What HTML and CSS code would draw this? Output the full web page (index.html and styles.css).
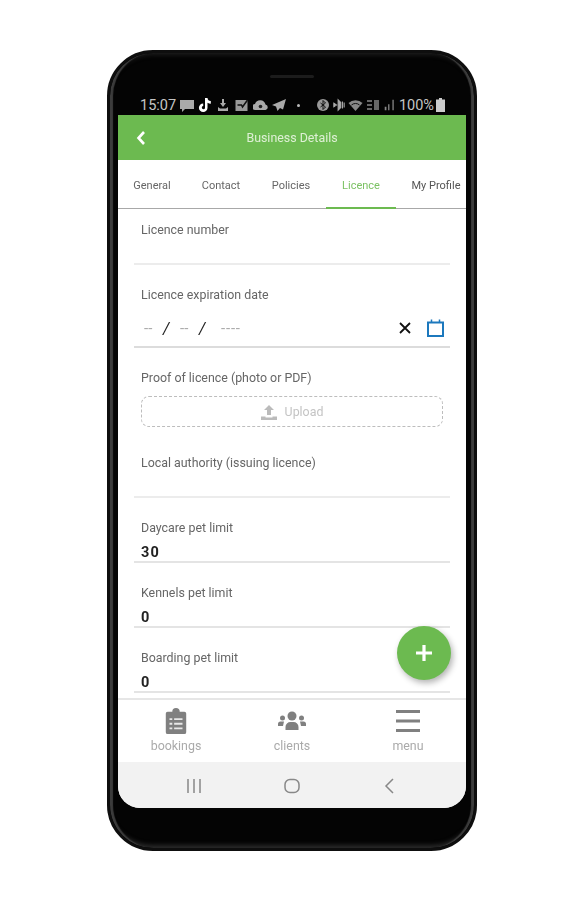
FILE: index.html
```html
<!DOCTYPE html>
<html lang="en">
<head>
    <meta charset="UTF-8">
    <meta name="viewport" content="width=device-width, initial-scale=1.0">
    <title>Business Details</title>
    <link rel="stylesheet" href="styles.css">
</head>
<body>
    <div class="phone">
        <div class="speaker"></div>

        <!-- Status bar -->
        <div class="status-bar">
            <span class="clock">15:07</span>
            <svg class="status-icon" viewBox="0 0 14 14"><path d="M0 2h14v9H5l-3 3v-3H0z" fill="#aaa"/></svg>
            <svg class="status-icon" viewBox="0 0 14 14"><path d="M7 0h2.500c.2 1.800 1.300 2.900 3.300 3.100v2.600c-1.200 0-2.300-.3-3.300-1v5a4.300 4.300 0 1 1-4.300-4.300v2.700a1.600 1.600 0 1 0 1.800 1.600z" fill="#fff"/></svg>
            <svg class="status-icon" viewBox="0 0 14 14"><path d="M6 1h2v4h2L7 9 4 5h2zM2 9l2 1.500h6L12 9v4H2z" fill="#aaa"/></svg>
            <svg class="status-icon status-icon-wide" viewBox="0 0 14 14"><path d="M2 3h10v9H2z" fill="#999" stroke="#999" stroke-width="2"/><path d="M3 7h4l1 2 5-7" fill="none" stroke="#111" stroke-width="1.500"/></svg>
            <svg class="status-icon status-icon-wide" viewBox="0 0 14 14"><path d="M2 12a3 3 0 0 1-.5-6 5.500 5.500 0 0 1 10.500.5A2.800 2.800 0 0 1 12 12z" fill="#aaa"/><circle cx="7" cy="8.500" r="1.800" fill="#222"/></svg>
            <svg class="status-icon" viewBox="0 0 14 14"><path d="M14 1L0 7l4 1.500L5.500 13l2.500-3 3 1.500z" fill="#aaa"/></svg>
            <span class="status-dot"></span>
            <span class="status-spacer"></span>
            <div class="status-group">
                <svg class="status-icon" viewBox="0 0 14 14"><circle cx="7" cy="7" r="6" fill="#999"/><path d="M7 2.500v9M4.500 5l5 4L7 11.500M4.500 9l5-4L7 2.500" fill="none" stroke="#111" stroke-width="1"/></svg>
                <svg class="status-icon status-icon-small" viewBox="0 0 14 14"><path d="M1 5l3 2-3 2zM6 1v12l3-3V4zM11 3v8M13 4v6" fill="#aaa" stroke="#aaa" stroke-width="1.300"/></svg>
                <svg class="status-icon status-icon-wide" viewBox="0 0 14 14"><path d="M0 5a10 10 0 0 1 14 0l-7 8z" fill="#888"/><path d="M3 7a6 6 0 0 1 8 0" fill="none" stroke="#111"/></svg>
                <svg class="status-icon" viewBox="0 0 14 14"><path d="M1 2h5v2H1zM1 6h5v2H1zM1 10h5v2H1zM8 2h5v10H8z" fill="#666"/></svg>
                <svg class="status-icon status-icon-small" viewBox="0 0 14 14"><path d="M2 9h2v4H2zM6 6h1.500v7H6zM11 1h1.500v12H11z" fill="#888"/></svg>
            </div>
            <span class="battery-text">100%</span>
            <svg class="battery" viewBox="0 0 9 14"><path d="M3 0h3v1.500h3V14H0V1.500h3z" fill="#ccc"/></svg>
        </div>

        <div class="screen">
            <!-- Header -->
            <div class="app-header">
                <svg class="back-icon" viewBox="0 0 10 16"><path d="M8 2L2.500 8 8 14" fill="none" stroke="#fff" stroke-width="2.600"/></svg>
                <span class="app-title">Business Details</span>
            </div>

            <!-- Tabs -->
            <div class="tabs">
                <div class="tab">General</div>
                <div class="tab">Contact</div>
                <div class="tab">Policies</div>
                <div class="tab tab-active">Licence</div>
                <div class="tab tab-last">My Profile</div>
            </div>

            <!-- Form -->
            <div class="form">
                <div class="field">
                    <div class="field-label">Licence number</div>
                    <div class="field-input"></div>
                </div>
                <div class="field">
                    <div class="field-label">Licence expiration date</div>
                    <div class="field-input date-input">
                        <span class="date-part">--</span>
                        <span class="date-slash">/</span>
                        <span class="date-part">--</span>
                        <span class="date-slash">/</span>
                        <span class="date-part date-year">----</span>
                        <svg class="clear-icon" viewBox="0 0 12 12"><path d="M1 1l10 10M11 1L1 11" stroke="#111" stroke-width="1.800"/></svg>
                        <svg class="calendar-icon" viewBox="0 0 17 18"><path d="M1 3.500h15v13.500H1z" fill="none" stroke="#1c78bd" stroke-width="2"/><path d="M4.500 .5v3M12.500 .5v3" stroke="#1c78bd" stroke-width="1.500"/></svg>
                    </div>
                </div>
                <div class="field field-upload">
                    <div class="field-label">Proof of licence (photo or PDF)</div>
                    <div class="upload">
                        <svg class="upload-icon" viewBox="0 0 16 16"><path d="M8 1l5 5h-3v5H6V6H3zM0 12.500h4.500v1h7v-1H16V16H0z" fill="#bbb"/></svg>
                        <span>Upload</span>
                    </div>
                </div>
                <div class="field">
                    <div class="field-label">Local authority (issuing licence)</div>
                    <div class="field-input"></div>
                </div>
                <div class="field">
                    <div class="field-label">Daycare pet limit</div>
                    <div class="field-input field-value">30</div>
                </div>
                <div class="field">
                    <div class="field-label">Kennels pet limit</div>
                    <div class="field-input field-value">0</div>
                </div>
                <div class="field">
                    <div class="field-label">Boarding pet limit</div>
                    <div class="field-input field-value">0</div>
                </div>
            </div>

            <!-- Bottom navigation -->
            <div class="bottom-nav">
                <div class="nav-item">
                    <svg class="nav-icon" viewBox="0 0 24 28"><path d="M3 4h5a4 4 0 0 1 8 0h5a2 2 0 0 1 2 2v20a2 2 0 0 1-2 2H3a2 2 0 0 1-2-2V6a2 2 0 0 1 2-2z" fill="#808080"/><path d="M5 11h3v2H5zM10 11h9v2h-9zM5 16h3v2H5zM10 16h9v2h-9zM5 21h3v2H5zM10 21h9v2h-9z" fill="#e8e8e8"/></svg>
                    <span>bookings</span>
                </div>
                <div class="nav-item">
                    <svg class="nav-icon nav-icon-wide" viewBox="0 0 28 20"><circle cx="14" cy="5" r="4.500" fill="#808080"/><circle cx="4.500" cy="7" r="2.500" fill="#808080"/><circle cx="23.500" cy="7" r="2.500" fill="#808080"/><path d="M7.500 19v-3a5 5 0 0 1 5-5h3a5 5 0 0 1 5 5v3zM0 15v-2a2.500 2.500 0 0 1 2.500-2.500H6L5 15zM28 15v-2a2.500 2.500 0 0 0-2.500-2.500H22l1 4.500z" fill="#808080"/></svg>
                    <span>clients</span>
                </div>
                <div class="nav-item">
                    <svg class="nav-icon" viewBox="0 0 24 24"><path d="M0 1h24v3H0zM0 10.500h24v3H0zM0 20h24v3H0z" fill="#808080"/></svg>
                    <span>menu</span>
                </div>
            </div>

            <!-- Android buttons -->
            <div class="android-nav">
                <svg class="android-icon" viewBox="0 0 16 16"><path d="M2 1v14M8 1v14M14 1v14" stroke="#888" stroke-width="1.500"/></svg>
                <svg class="android-icon" viewBox="0 0 16 16"><rect x="1" y="1.500" width="14" height="13" rx="5" fill="none" stroke="#888" stroke-width="1.500"/></svg>
                <svg class="android-icon" viewBox="0 0 16 16"><path d="M11 1L4 8l7 7" fill="none" stroke="#888" stroke-width="1.500"/></svg>
            </div>

            <button class="fab">
                <svg viewBox="0 0 18 18"><path d="M9 1v16M1 9h16" stroke="#fff" stroke-width="3.200"/></svg>
            </button>
        </div>
    </div>
</body>
</html>
```

FILE: styles.css
```css
body {
    margin: 0;
    background-color: #ffffff;
    font-family: Roboto, "Liberation Sans", sans-serif;
    color: #666;
}

/* Phone frame, the source picture is a soft video still */
.phone {
    box-sizing: border-box;
    width: 370px;
    height: 801px;
    margin: 50px 0 0 107px;
    padding: 0 8px;
    display: flex;
    flex-direction: column;
    align-items: center;
    background-color: #040404;
    border: 3px solid #0e0e0e;
    border-radius: 46px;
    box-shadow: inset 4px 0 1px -1px #3c3c3c, inset -4px 0 1px -1px #3c3c3c, inset 0 -7px 4px -4px #2a2a2a, inset 0 5px 4px -3px #1c1c1c;
    filter: blur(0.5px);
}
.speaker {
    width: 44px;
    height: 3px;
    margin-top: 22px;
    background-color: #1c1c1c;
    border-radius: 2px;
}

/* Status bar */
.status-bar {
    box-sizing: border-box;
    width: 348px;
    height: 20px;
    margin-top: 17px;
    padding: 0 21px 0 22px;
    display: flex;
    align-items: center;
    gap: 4px;
    color: #c4c4c4;
    font-size: 14.5px;
}
.status-group {
    display: flex;
    align-items: center;
    gap: 3px;
}
.status-icon {
    width: 14px;
    height: 14px;
    flex-shrink: 0;
}
.status-icon-wide {
    width: 15px;
}
.status-icon-small {
    width: 12px;
}
.status-dot {
    width: 3px;
    height: 3px;
    margin-left: 7px;
    background-color: #bbb;
    border-radius: 50%;
}
.status-spacer {
    flex: 1;
}
.battery {
    width: 9px;
    height: 14px;
    margin-left: -2px;
    flex-shrink: 0;
}

/* Screen */
.screen {
    position: relative;
    width: 348px;
    height: 693px;
    display: flex;
    flex-direction: column;
    background-color: #ffffff;
    border-radius: 0 0 22px 22px;
    overflow: hidden;
}
.app-header {
    height: 45px;
    flex-shrink: 0;
    display: flex;
    align-items: center;
    background-color: #6cba50;
}
.back-icon {
    width: 10px;
    height: 16px;
    margin-left: 18px;
}
.app-title {
    flex: 1;
    margin-right: 28px;
    text-align: center;
    font-size: 12.4px;
    color: #dff0d6;
}

/* Tabs */
.tabs {
    height: 49px;
    flex-shrink: 0;
    display: flex;
    box-sizing: border-box;
    border-bottom: 1px solid #a8a8a8;
    font-size: 11px;
}
.tab {
    width: 70px;
    flex-shrink: 0;
    box-sizing: border-box;
    padding-top: 19px;
    text-align: center;
    color: #666;
}
.tab:first-child {
    width: 68px;
}
.tab-active {
    color: #7cc264;
    border-bottom: 2px solid #6cba50;
    height: 49px;
}
.tab-last {
    padding-left: 10px;
    white-space: nowrap;
    color: #555;
}

/* Form */
.form {
    flex: 1;
    min-height: 0;
    padding: 0 16px;
    overflow: hidden;
}
.field {
    padding-top: 22px;
}
.field:first-child {
    padding-top: 13px;
}
.field-upload {
    padding-bottom: 6px;
}
.field-label {
    height: 16px;
    padding-left: 7px;
    font-size: 12.4px;
    line-height: 16px;
    color: #666;
}
.field-input {
    box-sizing: border-box;
    height: 27px;
    padding-left: 7px;
    border-bottom: 2px solid #ececec;
}
.field-value {
    font-size: 14.5px;
    font-weight: 700;
    letter-spacing: 1.200px;
    line-height: 34px;
    color: #222;
    border-bottom-color: #e4e4e4;
}
.date-input {
    height: 45px;
    padding-top: 7px;
    display: flex;
    align-items: center;
    font-size: 15px;
    color: #aaa;
    border-bottom-color: #dcdcdc;
}
.date-part {
    width: 17px;
    margin-left: 3px;
}
.date-slash {
    width: 14px;
    margin-left: 2px;
    color: #222;
    font-size: 16px;
    font-style: italic;
}
.date-year {
    flex: 1;
    margin-left: 8px;
    letter-spacing: 0.8px;
}
.clear-icon {
    width: 12px;
    height: 12px;
    margin-right: 16px;
}
.calendar-icon {
    width: 17px;
    height: 18px;
    margin-right: 6px;
}
.upload {
    box-sizing: border-box;
    height: 31px;
    margin: 10px 7px 0;
    display: flex;
    align-items: center;
    justify-content: center;
    gap: 8px;
    border: 1.500px dashed #bdbdbd;
    border-radius: 8px;
    font-size: 12.4px;
    color: #c4c4c4;
}
.upload-icon {
    width: 16px;
    height: 16px;
}

/* Bottom navigation */
.bottom-nav {
    height: 64px;
    flex-shrink: 0;
    display: flex;
    box-sizing: border-box;
    border-top: 2px solid #e6e6e6;
}
.nav-item {
    flex: 1;
    display: flex;
    flex-direction: column;
    align-items: center;
    gap: 4px;
    padding-top: 8px;
    font-size: 12.4px;
    color: #aaa;
}
.nav-icon {
    width: 24px;
    height: 26px;
}
.nav-icon-wide {
    width: 28px;
}

/* Android buttons */
.android-nav {
    height: 46px;
    flex-shrink: 0;
    display: flex;
    align-items: center;
    justify-content: center;
    gap: 82px;
    padding-top: 2px;
    box-sizing: border-box;
    background-color: #f2f2f2;
}
.android-icon {
    width: 16px;
    height: 16px;
}

.fab {
    position: absolute;
    right: 15px;
    bottom: 128px;
    width: 54px;
    height: 54px;
    padding: 18px;
    border: none;
    border-radius: 50%;
    background-color: #6cba50;
    box-shadow: 2px 3px 6px rgba(0, 0, 0, 0.3);
}
```
